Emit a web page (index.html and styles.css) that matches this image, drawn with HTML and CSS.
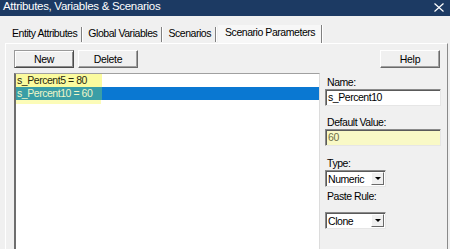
FILE: index.html
```html
<!DOCTYPE html>
<html lang="en">
<head>
    <meta charset="UTF-8">
    <meta name="viewport" content="width=device-width, initial-scale=1.0">
    <title>Attributes, Variables &amp; Scenarios</title>
    <link rel="stylesheet" href="styles.css">
</head>
<body>
    <div class="titlebar">
        <span class="title">Attributes, Variables &amp; Scenarios</span>
        <svg class="close" width="10" height="9" viewBox="0 0 10 9">
            <path d="M0.5 0.5 L9.5 8.5 M9.5 0.5 L0.5 8.5" stroke="#fff" stroke-width="1.2" fill="none"/>
        </svg>
    </div>

    <div class="tabs">
        <div class="tab">Entity Attributes</div>
        <div class="tab">Global Variables</div>
        <div class="tab">Scenarios</div>
        <div class="tab active">Scenario Parameters</div>
    </div>

    <div class="panel">
        <div class="left">
            <div class="buttons">
                <button class="btn default">New</button>
                <button class="btn">Delete</button>
            </div>
            <div class="listbox">
                <div class="item"><span class="mark">s_Percent5 = 80</span></div>
                <div class="item selected"><span class="mark">s_Percent10 = 60</span></div>
                <div class="mark-tail"></div>
            </div>
        </div>

        <div class="right">
            <div class="help-row">
                <button class="btn">Help</button>
            </div>
            <label class="field-label first">Name:</label>
            <div class="textbox">s_Percent10</div>
            <label class="field-label">Default Value:</label>
            <div class="textbox marked">60</div>
            <label class="field-label type">Type:</label>
            <div class="combo">
                <span class="combo-text">Numeric</span>
                <span class="combo-arrow"></span>
            </div>
            <label class="field-label paste">Paste Rule:</label>
            <div class="combo">
                <span class="combo-text">Clone</span>
                <span class="combo-arrow"></span>
            </div>
        </div>
    </div>
</body>
</html>
```

FILE: styles.css
```css
body {
    margin: 0;
    width: 450px;
    height: 249px;
    overflow: hidden;
    background-color: #f0f0f0;
    font-family: "Liberation Sans", Arial, sans-serif;
    font-size: 10.5px;
    letter-spacing: -0.45px;
    color: #000;
}
.titlebar {
    height: 16px;
    background-color: #1c3a63;
    display: flex;
    justify-content: space-between;
    align-items: flex-start;
    padding: 0 6px 0 3px;
}
.title {
    color: #fff;
    font-size: 11.5px;
    letter-spacing: -0.3px;
    line-height: 13px;
}
.close {
    margin-top: 3px;
}
.tabs {
    display: flex;
    align-items: flex-end;
    height: 27px;
    padding-left: 8px;
    box-sizing: border-box;
}
.tab {
    height: 15px;
    line-height: 13px;
    padding: 0 4px;
    margin-bottom: 1px;
    border-right: 1px solid #808080;
    box-shadow: 1px 0 0 #fff;
    margin-right: 2px;
}
.tab.active {
    height: 18px;
    line-height: 14px;
    padding: 0 6px 0 7px;
    margin-bottom: 0;
    background-color: #f7f7f7;
}
.panel {
    display: flex;
    margin-left: 5px;
    width: 443px;
    height: 206px;
    border-top: 1px solid #fff;
    border-left: 1px solid #fff;
    border-right: 1px solid #8a8a8a;
    box-sizing: border-box;
}
.left {
    display: flex;
    flex-direction: column;
    padding: 6px 0 0 8px;
    width: 314px;
    box-sizing: border-box;
}
.buttons {
    display: flex;
    gap: 4px;
}
.btn {
    width: 60px;
    height: 18px;
    padding: 0;
    font-family: inherit;
    font-size: 10.5px;
    letter-spacing: -0.3px;
    background-color: #f0f0f0;
    border: 1px solid;
    border-color: #fff #6a6a6a #6a6a6a #fff;
    box-shadow: inset -1px -1px 0 #a0a0a0;
    color: #000;
}
.btn.default {
    border-color: #9a9a9a #4a4a4a #4a4a4a #9a9a9a;
    box-shadow: inset 1px 1px 0 #fff, inset -1px -1px 0 #8a8a8a;
}
.listbox {
    margin-top: 5px;
    flex: 1;
    background-color: #fff;
    border-top: 1px solid #a0a0a0;
    border-left: 2px solid #6e6e6e;
    border-right: 1px solid #dcdcdc;
}
.item {
    height: 13px;
    line-height: 13px;
}
.mark {
    display: inline-block;
    width: 85px;
    padding-left: 1px;
    background-color: #fbfb9e;
    color: #2a2a10;
}
.item.selected {
    background-color: #0a78d2;
}
.item.selected .mark {
    background-color: #3a9ea6;
    color: #eef6c8;
}
.mark-tail {
    width: 85px;
    height: 4px;
    background-color: #fcfcb8;
}
.right {
    display: flex;
    flex-direction: column;
    padding: 6px 0 0 5px;
    width: 116px;
}
.help-row {
    display: flex;
    justify-content: flex-end;
    margin-right: 1px;
}
.field-label {
    display: block;
    line-height: 14px;
    margin-top: 9px;
    padding-left: 2px;
}
.field-label.first {
    margin-top: 7px;
}
.field-label.type {
    margin-top: 10px;
}
.field-label.paste {
    margin-top: 2px;
    margin-bottom: 9px;
}
.textbox {
    height: 17px;
    line-height: 15px;
    padding-left: 2px;
    background-color: #fff;
    border-top: 1px solid #8a8a8a;
    border-left: 1px solid #8a8a8a;
    border-right: 1px solid #e6e6e6;
    border-bottom: 1px solid #e6e6e6;
    box-shadow: inset 1px 1px 0 #5a5a5a;
    box-sizing: border-box;
}
.textbox.marked {
    background-color: #f9f9c6;
    color: #6e6e46;
}
.combo {
    display: flex;
    align-items: center;
    width: 61px;
    height: 17px;
    background-color: #fff;
    border-top: 1px solid #8a8a8a;
    border-left: 1px solid #8a8a8a;
    border-right: 1px solid #e6e6e6;
    border-bottom: 1px solid #e6e6e6;
    box-shadow: inset 1px 1px 0 #5a5a5a;
    box-sizing: border-box;
}
.combo-text {
    flex: 1;
    padding-left: 2px;
}
.combo-arrow {
    width: 13px;
    height: 13px;
    margin-right: 1px;
    background-color: #f0f0f0;
    border-left: 1px solid #fff;
    border-top: 1px solid #fff;
    border-right: 1px solid #6a6a6a;
    border-bottom: 1px solid #6a6a6a;
    box-sizing: border-box;
    display: flex;
    align-items: center;
    justify-content: center;
}
.combo-arrow::after {
    content: "";
    border-left: 3px solid transparent;
    border-right: 3px solid transparent;
    border-top: 3px solid #000;
}
```
